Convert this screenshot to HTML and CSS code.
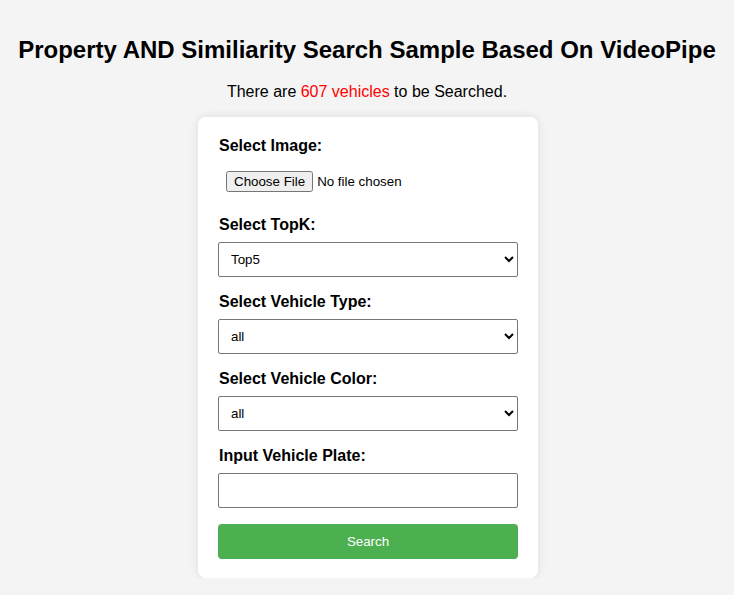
FILE: index.html
```html
<!DOCTYPE html>
<html>
<head>
<meta charset="utf-8">
<link rel="stylesheet" href="styles.css">
</head>
<body>
<h1 class="title">Property AND Similiarity Search Sample Based On VideoPipe</h1>
<p class="subtitle">There are <span class="count">607 vehicles</span> to be Searched.</p>
<form class="card">
  <label class="label" for="img">Select Image:</label>
  <input class="file" type="file" id="img">
  <label class="label" for="topk">Select TopK:</label>
  <select class="field" id="topk"><option>Top5</option><option>Top10</option></select>
  <label class="label" for="vtype">Select Vehicle Type:</label>
  <select class="field" id="vtype"><option>all</option></select>
  <label class="label" for="vcolor">Select Vehicle Color:</label>
  <select class="field" id="vcolor"><option>all</option></select>
  <label class="label" for="plate">Input Vehicle Plate:</label>
  <input class="field" type="text" id="plate">
  <button class="btn" type="button">Search</button>
</form>
</body>
</html>
```
FILE: styles.css
```css
html, body {
  margin: 0;
  background: #f4f4f4;
}
body {
  padding: 20px 0 0;
  font-family: "Liberation Sans", Arial, sans-serif;
  color: #000;
}
.title {
  font-size: 24px;
  font-weight: bold;
  text-align: center;
  margin: 16px 0 19px;
  line-height: 28px;
}
.subtitle {
  font-size: 16px;
  text-align: center;
  margin: 0 0 16px;
  line-height: 18px;
}
.count {
  color: #ff0000;
}
.card {
  width: 300px;
  margin: 0 0 0 calc(50% - 169px);
  background: #fff;
  border-radius: 8px;
  box-shadow: 0 0 10px rgba(0, 0, 0, 0.1);
  padding: 20px 20px 19px;
  display: flex;
  flex-direction: column;
}
.label {
  font-size: 16px;
  font-weight: bold;
  line-height: 18px;
  margin-bottom: 8px;
  padding-left: 1px;
}
.file {
  font-family: "Liberation Sans", Arial, sans-serif;
  font-size: 13.33px;
  padding: 8px;
  margin: 0 0 16px;
}
.field {
  box-sizing: border-box;
  width: 300px;
  height: 35px;
  margin: 0 0 16px;
  padding: 0 8px;
  font-family: "Liberation Sans", Arial, sans-serif;
  font-size: 13.33px;
  border: 1px solid #767676;
  border-radius: 2px;
  background: #fff;
}
.btn {
  height: 35px;
  width: 300px;
  margin-top: 0;
  border: none;
  border-radius: 4px;
  background: #4caf50;
  color: #fff;
  font-family: "Liberation Sans", Arial, sans-serif;
  font-size: 13.33px;
}
```
